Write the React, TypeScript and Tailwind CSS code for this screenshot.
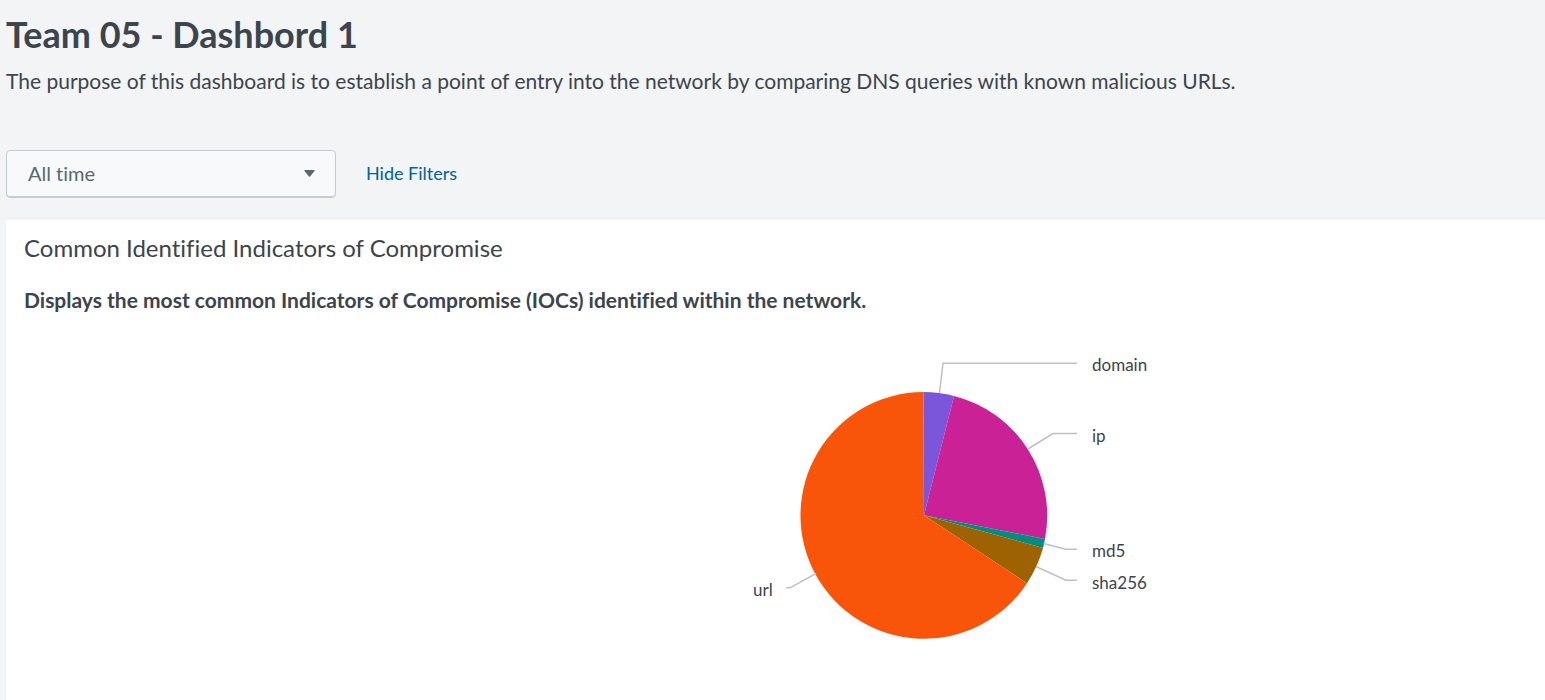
type Slice = { name: string; color: string; path: string; line: string; x: number; y: number };

const slices: Slice[] = [
  { name: 'domain', color: '#7B56DB', path: 'M240 175.200L239.500 52A123.400 123.400 0 0 1 270 56Z', line: '255.5,53 259,23.3 393,23.3', x: 408, y: 31 },
  { name: 'ip', color: '#CB2196', path: 'M240 175.200L270 56A123.400 123.400 0 0 1 361 199Z', line: '344,109 369,93.5 393,93.5', x: 408, y: 102 },
  { name: 'md5', color: '#008C80', path: 'M240 175.200L361 199A123.400 123.400 0 0 1 359 208Z', line: '359.5,203.5 382,209.2 393,209.2', x: 408, y: 217 },
  { name: 'sha256', color: '#9D6300', path: 'M240 175.200L359 208A123.400 123.400 0 0 1 343 243.200Z', line: '352,226.5 382,240.2 393,240.2', x: 408, y: 249 },
  { name: 'url', color: '#F8540A', path: 'M240 175.200L343 243.200A123.400 123.400 0 1 1 239.500 52Z', line: '132,233.5 106,247.8 102,247.8', x: 69, y: 256 },
];

function IocPieChart() {
  return (
    <svg className="h-[320px] w-[480px] shrink-0" viewBox="0 0 480 320" role="img" aria-label="Indicators of compromise by type">
      {slices.map((s) => (
        <path key={s.name} d={s.path} fill={s.color} />
      ))}
      {slices.map((s) => (
        <polyline key={s.name} points={s.line} fill="none" stroke="#C0C0C0" strokeWidth="1.5" />
      ))}
      {slices.map((s) => (
        <text key={s.name} x={s.x} y={s.y} fill="#3C444D" className="text-[17px]">
          {s.name}
        </text>
      ))}
    </svg>
  );
}

export default function App() {
  return (
    <main className="flex min-h-screen flex-col bg-[#F2F4F5] pl-1.5 font-['Lato','Open_Sans',sans-serif] text-[#3C444D] [font-variant-ligatures:none]">
      <header className="pt-3.5">
        <h1 className="text-[36px] font-bold leading-10">Team 05 - Dashbord 1</h1>
        <p className="mt-[13px] text-[21px] leading-7">
          The purpose of this dashboard is to establish a point of entry into the network by comparing DNS queries with known malicious URLs.
        </p>
      </header>

      <div className="mt-[55px] flex items-center gap-[30px]">
        <div className="relative w-[330px]">
          <select
            aria-label="Time range"
            className="h-12 w-full appearance-none rounded border border-[#C3CBD4] bg-[#F7F9FA] pb-0.5 pl-[21px] pr-10 text-[20px] text-[#5C6773] shadow-[inset_0_-1px_0_#C3CBD4]"
          >
            <option>All time</option>
          </select>
          <svg className="pointer-events-none absolute right-[21px] top-5 h-[7px] w-[11px]" viewBox="0 0 11 7" aria-hidden="true">
            <path d="M.8 0H10.2Q11 .2 10.5 1L6.3 6.3Q5.500 7 4.700 6.300L.5 1Q0 .2 .8 0Z" fill="#5C6773" />
          </svg>
        </div>
        <button type="button" className="pb-0.5 text-[18px] leading-6 text-[#006297]">Hide Filters</button>
      </div>

      <section className="mt-[22px] flex-1 bg-white pt-3.5">
        <h2 className="pl-[18px] text-[24px] leading-7">Common Identified Indicators of Compromise</h2>
        <p className="mt-6 pl-[18px] text-[21px] font-bold leading-7">
          Displays the most common Indicators of Compromise (IOCs) identified within the network.
        </p>
        <div className="mt-[26px] flex justify-center pl-[297px]">
          <IocPieChart />
        </div>
      </section>
    </main>
  );
}
